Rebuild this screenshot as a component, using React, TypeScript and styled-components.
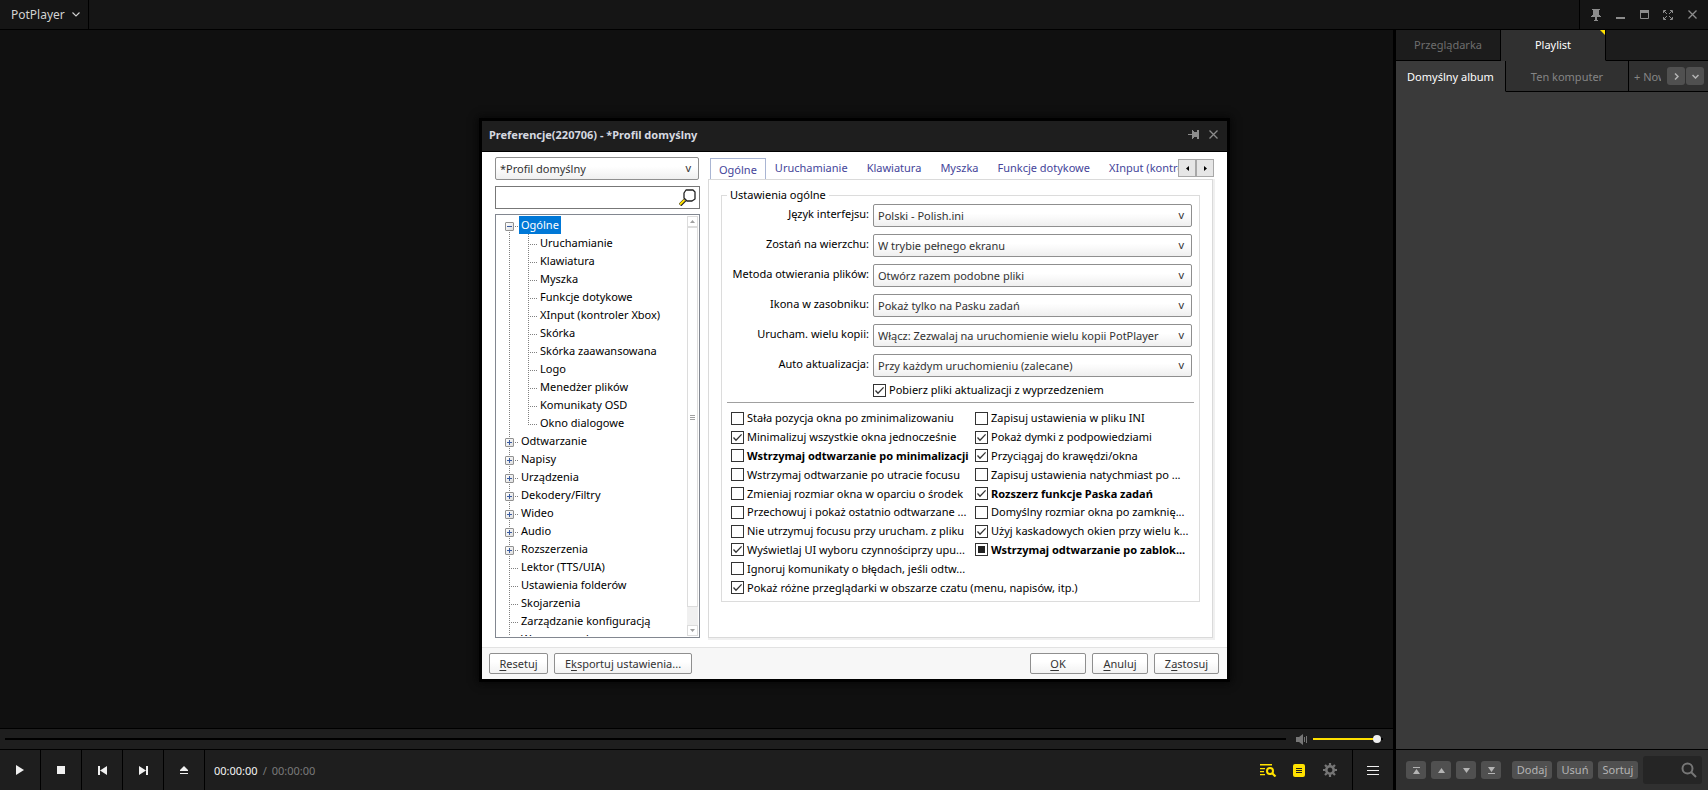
import React, { useEffect, useRef } from 'react';
import styled, { createGlobalStyle, css } from 'styled-components';

const Global = createGlobalStyle`
  *, *::before, *::after { box-sizing: border-box; }
  html, body, #root { height: 100%; }
  body {
    margin: 0;
    background: #101010;
    font-family: "Noto Sans", "Open Sans", sans-serif;
    font-size: 11px;
    line-height: 18px;
    overflow: hidden;
  }
  button, input, select { font: inherit; margin: 0; }
  button { padding: 0; border: 0; background: none; color: inherit; white-space: nowrap; }
  ul { list-style: none; margin: 0; padding: 0; }
  svg { display: block; }
`;

const Player = styled.div`
  position: relative;
  display: flex;
  flex-direction: column;
  height: 100vh;
  min-height: 700px;
`;

const TitleBar = styled.header`
  display: flex;
  justify-content: space-between;
  height: 30px;
  flex: none;
  background: #151515;
  border-bottom: 1px solid #000;
`;

const AppMenu = styled.button`
  display: flex;
  align-items: center;
  gap: 7px;
  width: 89px;
  padding-left: 11px;
  border-right: 1px solid #000;
  color: #d2d2d2;
  font-size: 12px;
`;

const WindowButtons = styled.div`
  display: flex;
  align-items: center;
  width: 129px;
  padding-left: 4px;
  border-left: 1px solid #000;
  color: #8c8c8c;
`;

const IconButton = styled.button`
  display: grid;
  place-items: center;
  width: 24px;
  height: 24px;
`;

const Main = styled.div`
  display: flex;
  flex: 1;
  min-height: 0;
`;

const Stage = styled.main`
  display: flex;
  flex-direction: column;
  flex: 1;
  min-width: 0;
  border-right: 3px solid #000;
`;

const Video = styled.div`
  flex: 1;
  background: #101010;
`;

const SeekRow = styled.div`
  display: flex;
  align-items: center;
  height: 21px;
  padding: 0 10px 0 5px;
  background: #1e1e1e;
  border-top: 1px solid #000;
  color: #767676;
`;

const Slider = styled.input`
  appearance: none;
  height: 8px;
  background: linear-gradient(#000, #000) center / 100% 2px no-repeat;
  outline: none;
  &::-webkit-slider-thumb {
    appearance: none;
    width: 8px;
    height: 8px;
    border-radius: 50%;
    background: #f0f0f0;
  }
`;

const Seek = styled(Slider)`
  flex: 1;
  margin-right: 10px;
  &::-webkit-slider-thumb { opacity: 0; }
`;

const Volume = styled(Slider)`
  width: 70px;
  margin-left: 5px;
  background: linear-gradient(90deg, #ffe100 92%, #000 92%) center / 100% 2px no-repeat;
`;

const Controls = styled.div`
  display: flex;
  align-items: stretch;
  height: 41px;
  background: #1e1e1e;
  border-top: 1px solid #000;
  color: #f0f0f0;
`;

const ControlButton = styled.button`
  display: grid;
  place-items: center;
  width: 41px;
  border-right: 1px solid #000;
`;

const Time = styled.div`
  display: flex;
  align-items: center;
  gap: 5px;
  flex: 1;
  padding: 2px 0 0 9px;
  color: #7a7a7a;
  strong { font-weight: 400; color: #f4f4f4; }
`;

const Extras = styled.div`
  display: flex;
  align-items: center;
  gap: 7px;
  padding-right: 10px;
  color: #ffe100;
`;

const MenuButton = styled(ControlButton)`
  border-right: 0;
  border-left: 1px solid #000;
  padding-right: 1px;
`;

const Sidebar = styled.aside`
  display: flex;
  flex-direction: column;
  flex: none;
  width: 312px;
  background: #3a3a3a;
`;

const SideTabs = styled.div`
  display: flex;
  height: 31px;
  background: #1c1c1c;
`;

const SideTab = styled.button<{ $active?: boolean }>`
  display: grid;
  align-items: center;
  justify-items: center;
  width: 105px;
  border-right: 1px solid #000;
  border-bottom: 1px solid ${p => (p.$active ? '#303030' : '#000')};
  background: ${p => (p.$active ? '#303030' : '#1c1c1c')};
  color: ${p => (p.$active ? '#fff' : '#6e6e6e')};
  > * { grid-area: 1 / 1; }
`;

const TabFill = styled.div`
  flex: 1;
  border-bottom: 1px solid #000;
`;

const Corner = styled.svg`
  align-self: start;
  justify-self: end;
`;

const AlbumTabs = styled.div`
  display: flex;
  height: 31px;
`;

const AlbumTab = styled.button<{ $active?: boolean; $w: number }>`
  flex: none;
  width: ${p => p.$w}px;
  padding-top: 2px;
  border-right: 1px solid #000;
  border-bottom: 1px solid ${p => (p.$active ? '#3a3a3a' : '#000')};
  background: ${p => (p.$active ? '#3a3a3a' : '#303030')};
  color: ${p => (p.$active ? '#fff' : '#858585')};
`;

const AlbumMore = styled.div`
  display: flex;
  align-items: center;
  flex: 1;
  min-width: 0;
  gap: 1px;
  padding: 0 4px 0 5px;
  background: #303030;
  border-bottom: 1px solid #000;
`;

const NewAlbum = styled.button`
  flex: 1;
  min-width: 0;
  margin-right: 5px;
  padding-top: 2px;
  overflow: hidden;
  text-align: left;
  color: #858585;
`;

const SmallButton = styled.button<{ $w: number }>`
  display: grid;
  place-items: center;
  flex: none;
  width: ${p => p.$w}px;
  height: 18px;
  border-radius: 3px;
  background: #505050;
  color: #b4b4b4;
`;

const Playlist = styled.div`
  flex: 1;
`;

const SideFooter = styled.div`
  display: flex;
  align-items: center;
  gap: 5px;
  height: 41px;
  padding: 0 6px 0 10px;
  background: #303030;
  border-top: 1px solid #000;
`;

const Spacer = styled.span<{ $w?: number }>`
  ${p => (p.$w ? css`width: ${p.$w}px;` : css`flex: 1;`)}
`;

const SideSearch = styled.label`
  display: flex;
  align-items: center;
  flex: 1;
  min-width: 0;
  height: 28px;
  padding-right: 5px;
  border-radius: 3px;
  background: #252525;
  color: #767676;
  input {
    flex: 1;
    min-width: 0;
    border: 0;
    background: none;
    color: #ddd;
    outline: none;
  }
  svg { flex: none; }
`;

/* Preferences window */

const Dialog = styled.section`
  position: absolute;
  left: 482px;
  top: 121px;
  width: 745px;
  background: #fff;
  color: #000;
  box-shadow: 0 0 0 3px #000, 0 0 8px 4px #060606;
`;

const DialogHead = styled.header`
  display: flex;
  align-items: center;
  height: 31px;
  padding: 0 1px 3px 7px;
  background: #1e1e1e;
  border-bottom: 1px solid #000;
  color: #d6d9e0;
  h1 { flex: 1; margin: 0; font-size: 11px; font-weight: 700; }
`;

const HeadButton = styled.button`
  display: grid;
  place-items: center;
  width: 20px;
  height: 20px;
  color: #8c8c8c;
`;

const DialogBody = styled.div`
  display: flex;
  align-items: stretch;
  gap: 8px;
  height: 495px;
  padding: 5px 13px 9px;
`;

const Nav = styled.div`
  display: flex;
  flex-direction: column;
  width: 205px;
`;

const SelectBox = styled.div`
  display: grid;
  align-items: center;
  height: 23px;
  border: 1px solid #8f8f8f;
  border-radius: 2px;
  background: linear-gradient(#fff 40%, #efefef);
  color: #333;
  select {
    grid-area: 1 / 1;
    appearance: none;
    width: 100%;
    height: 21px;
    padding: 0 20px 0 4px;
    border: 0;
    background: none;
    color: inherit;
    outline: none;
  }
  span { grid-area: 1 / 1; justify-self: end; padding: 0 7px 1px 0; pointer-events: none; }
`;

const ProfileBox = styled(SelectBox)`
  margin-right: 1px;
`;

const SearchBox = styled.label`
  display: flex;
  align-items: center;
  height: 23px;
  margin: 6px 0 5px;
  padding-right: 3px;
  border: 1px solid #777;
  input { flex: 1; min-width: 0; border: 0; outline: none; background: none; }
`;

const TreeBox = styled.div`
  display: flex;
  flex: 1;
  min-height: 0;
  padding: 1px;
  border: 1px solid #828790;
  overflow: hidden;
`;

const Tree = styled.ul`
  flex: 1;
  min-width: 0;
  overflow: hidden;
`;

const dotsV = 'repeating-linear-gradient(#808080 0 1px, transparent 1px 2px)';
const dotsH = 'repeating-linear-gradient(90deg, #808080 0 1px, transparent 1px 2px)';

type Kind = 'first' | 'branch' | 'leaf' | 'child' | 'lastChild';

const treeLines: Record<Kind, ReturnType<typeof css>> = {
  first: css`background: ${dotsV} 12px 16px / 1px 18px no-repeat, ${dotsH} 18px 10px / 4px 1px no-repeat;`,
  branch: css`background: ${dotsV} 12px 0 / 1px 18px no-repeat, ${dotsH} 18px 10px / 4px 1px no-repeat;`,
  leaf: css`background: ${dotsV} 12px 0 / 1px 18px no-repeat, ${dotsH} 12px 10px / 10px 1px no-repeat;`,
  child: css`background: ${dotsV} 12px 0 / 1px 18px no-repeat, ${dotsV} 31px 0 / 1px 18px no-repeat, ${dotsH} 31px 10px / 10px 1px no-repeat;`,
  lastChild: css`background: ${dotsV} 12px 0 / 1px 18px no-repeat, ${dotsV} 31px 0 / 1px 10px no-repeat, ${dotsH} 31px 10px / 10px 1px no-repeat;`,
};

const TreeRow = styled.li<{ $kind: Kind }>`
  display: flex;
  height: 18px;
  padding-left: ${p => (p.$kind === 'child' || p.$kind === 'lastChild' ? 41 : p.$kind === 'leaf' ? 22 : 8)}px;
  ${p => treeLines[p.$kind]}
`;

const Expander = styled.button`
  display: grid;
  place-items: center;
  width: 9px;
  height: 9px;
  margin: 6px 5px 0 0;
  border: 1px solid #919191;
  border-radius: 1px;
  background: linear-gradient(135deg, #fff, #dedede);
  color: #3a5ba0;
`;

const NodeLabel = styled.button<{ $selected?: boolean }>`
  padding: 0 2px 1px;
  line-height: 17px;
  background: ${p => (p.$selected ? '#0078d7' : 'none')};
  color: ${p => (p.$selected ? '#fff' : '#000')};
`;

const ScrollBar = styled.div`
  display: flex;
  flex-direction: column;
  width: 11px;
  background: #f0f0f0;
  color: #a0a0a0;
`;

const ScrollButton = styled.button`
  display: grid;
  place-items: center;
  height: 11px;
  border: 1px solid #dcdcdc;
  background: #fff;
`;

const ScrollThumb = styled.div`
  display: grid;
  place-items: center;
  flex: 1;
  margin-bottom: 18px;
  border: 1px solid #dcdcdc;
  background: #fff;
`;

const Pages = styled.div`
  display: flex;
  flex-direction: column;
  flex: 1;
  min-width: 0;
`;

const TabStrip = styled.div`
  display: flex;
  align-items: flex-start;
  height: 22px;
  padding: 1px 0 0 2px;
`;

const TabList = styled.div`
  display: flex;
  flex: 1;
  min-width: 0;
  height: 22px;
  overflow: hidden;
`;

const PageTab = styled.button<{ $active?: boolean }>`
  flex: none;
  height: 22px;
  padding: ${p => (p.$active ? '0 8px' : '0 10px 2px 9px')};
  border: solid ${p => (p.$active ? '#a9b5d3' : 'transparent')};
  border-width: ${p => (p.$active ? '1px 1px 0' : '0')};
  background: #fff;
  color: #45459a;
`;

const ArrowButton = styled.button`
  display: grid;
  place-items: center;
  width: 18px;
  height: 18px;
  margin-top: 1px;
  border: 1px solid #a8a8a8;
  background: #e6e6e6;
  color: #000;
`;

const Page = styled.div`
  flex: 1;
  margin-right: 1px;
  padding: 6px 12px;
  border: 1px solid #dadada;
  box-shadow: 1px 1px 0 1px #f0f0f0;
`;

const Group = styled.fieldset`
  margin: 0;
  padding: 0 5px 4px;
  border: 1px solid #dcdcdc;
  min-width: 0;
  legend { padding: 0 3px; }
`;

const Fields = styled.div`
  display: grid;
  gap: 7px;
  padding-right: 2px;
`;

const Field = styled.label`
  display: grid;
  grid-template-columns: 142px 1fr;
  gap: 4px;
  > span:first-child { text-align: right; white-space: nowrap; line-height: 20px; }
`;

const CheckLabel = styled.label<{ $bold?: boolean }>`
  display: flex;
  align-items: center;
  gap: 3px;
  min-width: 0;
  white-space: nowrap;
  font-weight: ${p => (p.$bold ? 700 : 400)};
`;

const Box = styled.span`
  display: grid;
  flex: none;
  width: 13px;
  height: 13px;
  > * { grid-area: 1 / 1; }
  input { appearance: none; width: 13px; height: 13px; border: 1px solid #333; background: #fff; }
  svg { pointer-events: none; }
`;

const UpdateRow = styled.div`
  padding: 4px 0 3px 146px;
`;

const Rule = styled.hr`
  height: 1px;
  margin: 0 0 6px;
  border: 0;
  background: #a0a0a0;
`;

const Checks = styled.div`
  display: grid;
  grid-template-columns: 244px 1fr;
  grid-template-rows: repeat(10, 1fr);
  height: 188px;
  padding-left: 4px;
`;

const DialogFoot = styled.footer`
  display: flex;
  gap: 6px;
  height: 32px;
  padding: 5px 8px 5px 7px;
  background: #f7f7f7;
  border-top: 1px solid #e2e2e2;
`;

const PushButton = styled.button<{ $w: number }>`
  width: ${p => p.$w}px;
  height: 21px;
  border: 1px solid #8f8f8f;
  border-radius: 2px;
  background: linear-gradient(#fff 40%, #f2f2f2);
  color: #333;
  u { text-underline-offset: 2px; }
`;

const Check = ({ label, bold, checked, mixed }: { label: string; bold?: boolean; checked?: boolean; mixed?: boolean }) => {
  const ref = useRef<HTMLInputElement>(null);
  useEffect(() => {
    if (ref.current) ref.current.indeterminate = !!mixed;
  }, [mixed]);
  return (
    <CheckLabel $bold={bold}>
      <Box>
        <input ref={ref} type="checkbox" defaultChecked={checked} />
        {checked && (
          <svg width="13" height="13" fill="none" stroke="#333" strokeWidth="1.3">
            <path d="M2.5 6.5 5 9.3 10.6 3.4" />
          </svg>
        )}
        {mixed && (
          <svg width="13" height="13">
            <rect x="3" y="3" width="7" height="7" fill="#222" />
          </svg>
        )}
      </Box>
      <span>{label}</span>
    </CheckLabel>
  );
};

const Select = ({ value }: { value: string }) => (
  <SelectBox>
    <select defaultValue={value}>
      <option>{value}</option>
    </select>
    <span aria-hidden="true">v</span>
  </SelectBox>
);

const tree: [string, Kind][] = [
  ['Ogólne', 'first'],
  ['Uruchamianie', 'child'],
  ['Klawiatura', 'child'],
  ['Myszka', 'child'],
  ['Funkcje dotykowe', 'child'],
  ['XInput (kontroler Xbox)', 'child'],
  ['Skórka', 'child'],
  ['Skórka zaawansowana', 'child'],
  ['Logo', 'child'],
  ['Menedżer plików', 'child'],
  ['Komunikaty OSD', 'child'],
  ['Okno dialogowe', 'lastChild'],
  ['Odtwarzanie', 'branch'],
  ['Napisy', 'branch'],
  ['Urządzenia', 'branch'],
  ['Dekodery/Filtry', 'branch'],
  ['Wideo', 'branch'],
  ['Audio', 'branch'],
  ['Rozszerzenia', 'branch'],
  ['Lektor (TTS/UIA)', 'leaf'],
  ['Ustawienia folderów', 'leaf'],
  ['Skojarzenia', 'leaf'],
  ['Zarządzanie konfiguracją', 'leaf'],
  ['Wygaszacz ekranu', 'leaf'],
];

const tabs = ['Ogólne', 'Uruchamianie', 'Klawiatura', 'Myszka', 'Funkcje dotykowe', 'XInput (kontroler Xbox)'];

const fields = [
  ['Język interfejsu:', 'Polski - Polish.ini'],
  ['Zostań na wierzchu:', 'W trybie pełnego ekranu'],
  ['Metoda otwierania plików:', 'Otwórz razem podobne pliki'],
  ['Ikona w zasobniku:', 'Pokaż tylko na Pasku zadań'],
  ['Urucham. wielu kopii:', 'Włącz: Zezwalaj na uruchomienie wielu kopii PotPlayer'],
  ['Auto aktualizacja:', 'Przy każdym uruchomieniu (zalecane)'],
];

const PinIcon = () => (
  <svg width="10" height="12" fill="currentColor">
    <path d="M1 0h8v1H8v5h1v1h1v1H0V7h1V6h1V1H1zM4 8h2v3h1v1H3v-1h1z" />
  </svg>
);

const Shape = ({ d, w = 9, h = 9 }: { d: string; w?: number; h?: number }) => (
  <svg width={w} height={h} fill="currentColor">
    <path d={d} />
  </svg>
);

export default function App() {
  return (
    <>
      <Global />
      <Player>
        <TitleBar>
          <AppMenu>
            PotPlayer
            <svg width="8" height="5" fill="none" stroke="currentColor" strokeWidth="1.1">
              <path d="M.5.5 4 4 7.5.5" />
            </svg>
          </AppMenu>
          <WindowButtons>
            <IconButton aria-label="Przypnij"><PinIcon /></IconButton>
            <IconButton aria-label="Minimalizuj">
              <svg width="9" height="9" fill="currentColor"><path d="M0 7h9v2H0z" /></svg>
            </IconButton>
            <IconButton aria-label="Maksymalizuj">
              <svg width="9" height="9" fill="none" stroke="currentColor">
                <path d="M.5.5h8v8h-8z" />
                <path d="M0 1.5h9" strokeWidth="3" />
              </svg>
            </IconButton>
            <IconButton aria-label="Pełny ekran">
              <svg width="10" height="10" fill="none" stroke="currentColor">
                <path d="M.5 3V.5H3M7 .5h2.5V3M9.5 7v2.5H7M3 9.5H.5V7M1 1l3 3M9 1 6 4M1 9l3-3M9 9 6 6" />
              </svg>
            </IconButton>
            <IconButton aria-label="Zamknij">
              <svg width="9" height="9" fill="none" stroke="currentColor" strokeWidth="1.3"><path d="m.5.5 8 8m0-8-8 8" /></svg>
            </IconButton>
          </WindowButtons>
        </TitleBar>
        <Main>
          <Stage>
            <Video />
            <SeekRow>
              <Seek type="range" aria-label="Pozycja" defaultValue={0} />
              <svg width="12" height="11" fill="currentColor">
                <path d="M0 3h3l4-3v11L3 8H0zM8 3h1v5H8zM10 2h1v7h-1z" />
              </svg>
              <Volume type="range" aria-label="Głośność" defaultValue={97} />
            </SeekRow>
            <Controls>
              <ControlButton aria-label="Odtwórz"><Shape w={8} h={10} d="M0 0 8 5 0 10z" /></ControlButton>
              <ControlButton aria-label="Zatrzymaj"><Shape w={8} h={8} d="M0 0h8v8H0z" /></ControlButton>
              <ControlButton aria-label="Poprzedni"><Shape d="M0 0h2v9H0zM9 0v9L2 4.5z" /></ControlButton>
              <ControlButton aria-label="Następny"><Shape d="M7 0h2v9H7zM0 0l7 4.5L0 9z" /></ControlButton>
              <ControlButton aria-label="Otwórz"><Shape w={8} h={8} d="M4 0 8 4v1H0V4zM0 7h8v1H0z" /></ControlButton>
              <Time><strong>00:00:00</strong> <span>/</span> <span>00:00:00</span></Time>
              <Extras>
                <IconButton aria-label="Szukaj na liście">
                  <svg width="17" height="13" fill="none" stroke="currentColor" strokeWidth="1.4">
                    <path d="M0 .7h12M0 4.6h5M0 7.6h4M0 10.6h5" />
                    <circle cx="10" cy="7" r="3" strokeWidth="2" />
                    <path d="m12.5 9.5 3 3" strokeWidth="2.2" />
                  </svg>
                </IconButton>
                <IconButton aria-label="Lista odtwarzania">
                  <svg width="12" height="13">
                    <rect width="12" height="13" rx="2" fill="currentColor" />
                    <path d="M3 4.5h6M3 6.5h6M3 8.5h6" stroke="#1e1e1e" />
                  </svg>
                </IconButton>
                <IconButton aria-label="Ustawienia">
                  <svg width="14" height="14" viewBox="-7 -7 14 14" fill="none" stroke="#767676">
                    <circle r="3.7" strokeWidth="2.6" />
                    <path d="M0-4.5V-7M0 4.5V7M-4.5 0H-7M4.5 0H7M3.2-3.2 5-5M3.2 3.2 5 5M-3.2-3.2-5-5M-3.2 3.2-5 5" strokeWidth="2.2" />
                  </svg>
                </IconButton>
              </Extras>
              <MenuButton aria-label="Menu"><Shape w={12} d="M0 0h12v1H0zM0 4h12v1H0zM0 8h12v1H0z" /></MenuButton>
            </Controls>
          </Stage>
          <Sidebar>
            <SideTabs>
              <SideTab><span>Przeglądarka</span></SideTab>
              <SideTab $active>
                <span>Playlist</span>
                <Corner width="5" height="5" fill="#ffe100"><path d="M0 0h5v5z" /></Corner>
              </SideTab>
              <TabFill />
            </SideTabs>
            <AlbumTabs>
              <AlbumTab $w={110} $active>Domyślny album</AlbumTab>
              <AlbumTab $w={123}>Ten komputer</AlbumTab>
              <AlbumMore>
                <NewAlbum>+ Nowy album</NewAlbum>
                <SmallButton $w={18} aria-label="Dalej">
                  <svg width="5" height="7" fill="none" stroke="currentColor" strokeWidth="1.5"><path d="m1 .5 3 3-3 3" /></svg>
                </SmallButton>
                <SmallButton $w={18} aria-label="Więcej">
                  <svg width="7" height="5" fill="none" stroke="currentColor" strokeWidth="1.5"><path d="m.5 1 3 3 3-3" /></svg>
                </SmallButton>
              </AlbumMore>
            </AlbumTabs>
            <Playlist />
            <SideFooter>
              <SmallButton $w={20} aria-label="Na początek"><Shape w={7} h={7} d="M0 0h7v1H0zM3.5 2 7 7H0z" /></SmallButton>
              <SmallButton $w={20} aria-label="W górę"><Shape w={7} h={5} d="M3.5 0 7 5H0z" /></SmallButton>
              <SmallButton $w={20} aria-label="W dół"><Shape w={7} h={5} d="M0 0h7L3.5 5z" /></SmallButton>
              <SmallButton $w={20} aria-label="Na koniec"><Shape w={7} h={7} d="M0 0h7L3.5 5zM0 6h7v1H0z" /></SmallButton>
              <Spacer $w={1} />
              <SmallButton $w={40}>Dodaj</SmallButton>
              <SmallButton $w={36}>Usuń</SmallButton>
              <SmallButton $w={40}>Sortuj</SmallButton>
              <SideSearch aria-label="Szukaj">
                <input type="text" />
                <svg width="16" height="16" fill="none" stroke="currentColor" strokeWidth="2">
                  <circle cx="6.500" cy="6.500" r="5" />
                  <path d="m10 10 5 5" />
                </svg>
              </SideSearch>
            </SideFooter>
          </Sidebar>
        </Main>

        <Dialog role="dialog" aria-labelledby="prefs-title">
          <DialogHead>
            <h1 id="prefs-title">Preferencje(220706) - *Profil domyślny</h1>
            <HeadButton aria-label="Przypnij">
              <svg width="11" height="9" fill="currentColor"><path d="M0 4h4v1H0zM4 0h1v1h1v1h3V0h2v9H9V7H6v1H5v1H4z" /></svg>
            </HeadButton>
            <HeadButton aria-label="Zamknij">
              <svg width="9" height="9" fill="none" stroke="currentColor" strokeWidth="1.3"><path d="m.5.5 8 8m0-8-8 8" /></svg>
            </HeadButton>
            <Spacer $w={3} />
          </DialogHead>
          <DialogBody>
            <Nav>
              <ProfileBox>
                <select aria-label="Profil" defaultValue="*Profil domyślny">
                  <option>*Profil domyślny</option>
                </select>
                <span aria-hidden="true">v</span>
              </ProfileBox>
              <SearchBox aria-label="Szukaj">
                <input type="text" />
                <svg width="17" height="17" fill="none">
                  <path d="M1 16l5-5" stroke="#222" strokeWidth="3.6" />
                  <path d="M1 15.5l4.5-4.5" stroke="#ffe100" strokeWidth="2" />
                  <path d="M7 1h7l2 2v7l-3 2H8l-3-3V4z" stroke="#222" strokeWidth="1.3" strokeLinejoin="round" />
                </svg>
              </SearchBox>
              <TreeBox>
                <Tree>
                  {tree.map(([name, kind]) => (
                    <TreeRow key={name} $kind={kind}>
                      {(kind === 'first' || kind === 'branch') && (
                        <Expander aria-label={name}>
                          <svg width="5" height="5" fill="currentColor">
                            <path d={kind === 'first' ? 'M0 2h5v1H0z' : 'M0 2h5v1H0zM2 0h1v5H2z'} />
                          </svg>
                        </Expander>
                      )}
                      <NodeLabel $selected={kind === 'first'}>{name}</NodeLabel>
                    </TreeRow>
                  ))}
                </Tree>
                <ScrollBar>
                  <ScrollButton aria-label="Przewiń w górę"><Shape w={5} h={3} d="M2.5 0 5 3H0z" /></ScrollButton>
                  <ScrollThumb><Shape w={5} h={5} d="M0 0h5v1H0zM0 2h5v1H0zM0 4h5v1H0z" /></ScrollThumb>
                  <ScrollButton aria-label="Przewiń w dół"><Shape w={5} h={3} d="M0 0h5L2.5 3z" /></ScrollButton>
                </ScrollBar>
              </TreeBox>
            </Nav>
            <Pages>
              <TabStrip>
                <TabList>
                  {tabs.map((t, i) => (
                    <PageTab key={t} $active={i === 0}>{t}</PageTab>
                  ))}
                </TabList>
                <ArrowButton aria-label="Poprzednie karty"><Shape w={3} h={5} d="M3 0v5L0 2.5z" /></ArrowButton>
                <ArrowButton aria-label="Następne karty"><Shape w={3} h={5} d="M0 0l3 2.5L0 5z" /></ArrowButton>
              </TabStrip>
              <Page>
                <Group>
                  <legend>Ustawienia ogólne</legend>
                  <Fields>
                    {fields.map(([label, value]) => (
                      <Field key={label}>
                        <span>{label}</span>
                        <Select value={value} />
                      </Field>
                    ))}
                  </Fields>
                  <UpdateRow>
                    <Check checked label="Pobierz pliki aktualizacji z wyprzedzeniem" />
                  </UpdateRow>
                  <Rule />
                  <Checks>
                    <Check label="Stała pozycja okna po zminimalizowaniu" />
                    <Check label="Zapisuj ustawienia w pliku INI" />
                    <Check checked label="Minimalizuj wszystkie okna jednocześnie" />
                    <Check checked label="Pokaż dymki z podpowiedziami" />
                    <Check bold label="Wstrzymaj odtwarzanie po minimalizacji" />
                    <Check checked label="Przyciągaj do krawędzi/okna" />
                    <Check label="Wstrzymaj odtwarzanie po utracie focusu" />
                    <Check label="Zapisuj ustawienia natychmiast po ..." />
                    <Check label="Zmieniaj rozmiar okna w oparciu o środek" />
                    <Check checked bold label="Rozszerz funkcje Paska zadań" />
                    <Check label="Przechowuj i pokaż ostatnio odtwarzane ..." />
                    <Check label="Domyślny rozmiar okna po zamknię..." />
                    <Check label="Nie utrzymuj focusu przy urucham. z pliku" />
                    <Check checked label="Użyj kaskadowych okien przy wielu k..." />
                    <Check checked label="Wyświetlaj UI wyboru czynnościprzy upu..." />
                    <Check mixed bold label="Wstrzymaj odtwarzanie po zablok..." />
                    <Check label="Ignoruj komunikaty o błędach, jeśli odtw..." />
                    <span />
                    <Check checked label="Pokaż różne przeglądarki w obszarze czatu (menu, napisów, itp.)" />
                  </Checks>
                </Group>
              </Page>
            </Pages>
          </DialogBody>
          <DialogFoot>
            <PushButton $w={59}><u>R</u>esetuj</PushButton>
            <PushButton $w={138}>E<u>k</u>sportuj ustawienia...</PushButton>
            <Spacer />
            <PushButton $w={56}><u>O</u>K</PushButton>
            <PushButton $w={56}><u>A</u>nuluj</PushButton>
            <PushButton $w={65}>Z<u>a</u>stosuj</PushButton>
          </DialogFoot>
        </Dialog>
      </Player>
    </>
  );
}
